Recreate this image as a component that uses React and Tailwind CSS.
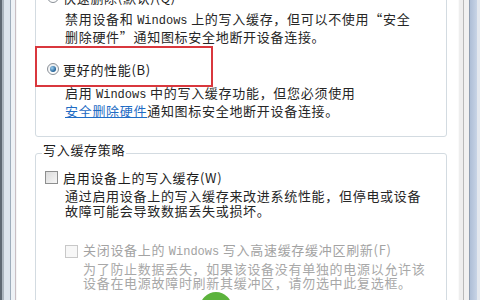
export default function App() {
  return (
    <div className="w-[480px] h-[300px] overflow-hidden flex bg-white text-[13px] leading-[15px] tracking-[0.7px] text-[#1c1c1c] font-['Noto_Sans_CJK_SC',sans-serif] relative">
      <LeftFrame />
      <div className="flex-1 flex flex-col pl-[18px] pr-[11px] min-w-0">
        <WriteRemovalGroup />
        <CachePolicyGroup />
      </div>
      <RightFrame />
      <div className="absolute left-[200px] top-[292px] w-[32px] h-[32px] rounded-full bg-[#5cb33c]" />
    </div>
  );
}

function LeftFrame() {
  return (
    <div className="w-[17px] h-full flex shrink-0">
      <div className="w-[2px] bg-[#5d6873]" />
      <div className="w-[2px] bg-[#a9b4be]" />
      <div className="w-[6px] bg-[#dbe4ed]" />
      <div className="w-[1px] bg-[#9eadbb]" />
      <div className="w-[4px] bg-[#eef2f6]" />
      <div className="w-[1px] bg-[#c9bfc4]" />
      <div className="w-[1px] bg-[#f6f6f6]" />
    </div>
  );
}

function RightFrame() {
  return (
    <div className="w-[22px] h-full flex shrink-0">
      <div className="w-[1px] bg-[#fafafa]" />
      <div className="w-[4px] bg-[#eeeeee]" />
      <div className="w-[1px] bg-[#b9b9b9]" />
      <div className="w-[5px] bg-[#f1f1f1]" />
      <div className="w-[1px] bg-[#8f9db0]" />
      <div className="w-[7px] bg-gradient-to-r from-[#aebed6] to-[#c8d4e6]" />
      <div className="w-[3px] bg-[#e4e8ee]" />
    </div>
  );
}

function Radio({ checked }) {
  return (
    <span className="w-[12px] h-[12px] rounded-full border border-[#8a9097] bg-gradient-to-b from-[#e9ecef] to-[#ffffff] flex items-center justify-center shrink-0">
      {checked && (
        <span className="w-[6px] h-[6px] rounded-full bg-[radial-gradient(circle_at_35%_35%,#9fd0f0,#1f5f95_70%)]" />
      )}
    </span>
  );
}

function Checkbox({ disabled }) {
  return (
    <span
      className={`w-[13px] h-[13px] border shrink-0 ${
        disabled
          ? "border-[#c8c8c8] bg-[#f7f7f7]"
          : "border-[#8e8f8f] bg-gradient-to-br from-[#dcdcdc] to-[#f6f6f6]"
      }`}
    />
  );
}

function WriteRemovalGroup() {
  return (
    <div className="-mt-[14px] border border-[#d3dbe1] rounded-[3px] pt-[3px] pb-[18px]">
      <div className="flex items-center gap-[4px] ml-[11px] h-[14px]">
        <Radio />
        <span>快速删除(默认)(Q)</span>
      </div>
      <div className="mt-[7px] pl-[29px] text-[#262626]">
        <p>
          禁用设备和 <span className="font-['Liberation_Mono',monospace] text-[12px] tracking-normal">Windows</span> 上的写入缓存，但可以不使用“安全
        </p>
        <p>删除硬件”通知图标安全地断开设备连接。</p>
      </div>
      <div className="relative mt-[18px] flex items-center gap-[4px] ml-[11px] h-[14px]">
        <Radio checked />
        <span>更好的性能(B)</span>
        <div className="absolute left-[-12px] top-[-16px] w-[178px] h-[41px] border-2 border-[#d9373d]" />
      </div>
      <div className="mt-[9px] pl-[29px] text-[#262626]">
        <p>
          启用 <span className="font-['Liberation_Mono',monospace] text-[12px] tracking-normal">Windows</span> 中的写入缓存功能，但您必须使用
        </p>
        <p>
          <span className="text-[#1f6cc4] underline">安全删除硬件</span>通知图标安全地断开设备连接。
        </p>
      </div>
    </div>
  );
}

function CachePolicyGroup() {
  return (
    <div className="mt-[16px] border border-[#d3dbe1] rounded-[3px] pb-[40px]">
      <span className="block w-fit -mt-[11px] ml-[6px] px-[1px] bg-white leading-[14px]">写入缓存策略</span>
      <div className="mt-[13px] flex items-center gap-[5px] ml-[9px] h-[14px]">
        <Checkbox />
        <span>启用设备上的写入缓存(W)</span>
      </div>
      <div className="mt-[4px] pl-[29px] text-[#262626]">
        <p>通过启用设备上的写入缓存来改进系统性能，但停电或设备</p>
        <p>故障可能会导致数据丢失或损坏。</p>
      </div>
      <div className="mt-[26px] flex items-center gap-[5px] ml-[29px] h-[14px] text-[#a3a3a3]">
        <Checkbox disabled />
        <span>
          关闭设备上的 <span className="font-['Liberation_Mono',monospace] text-[12px] tracking-normal">Windows</span> 写入高速缓存缓冲区刷新(F)
        </span>
      </div>
      <div className="mt-[4px] pl-[47px] leading-[14px] text-[#a8a8a8]">
        <p>为了防止数据丢失，如果该设备没有单独的电源以允许该</p>
        <p>设备在电源故障时刷新其缓冲区，请勿选中此复选框。</p>
      </div>
    </div>
  );
}
